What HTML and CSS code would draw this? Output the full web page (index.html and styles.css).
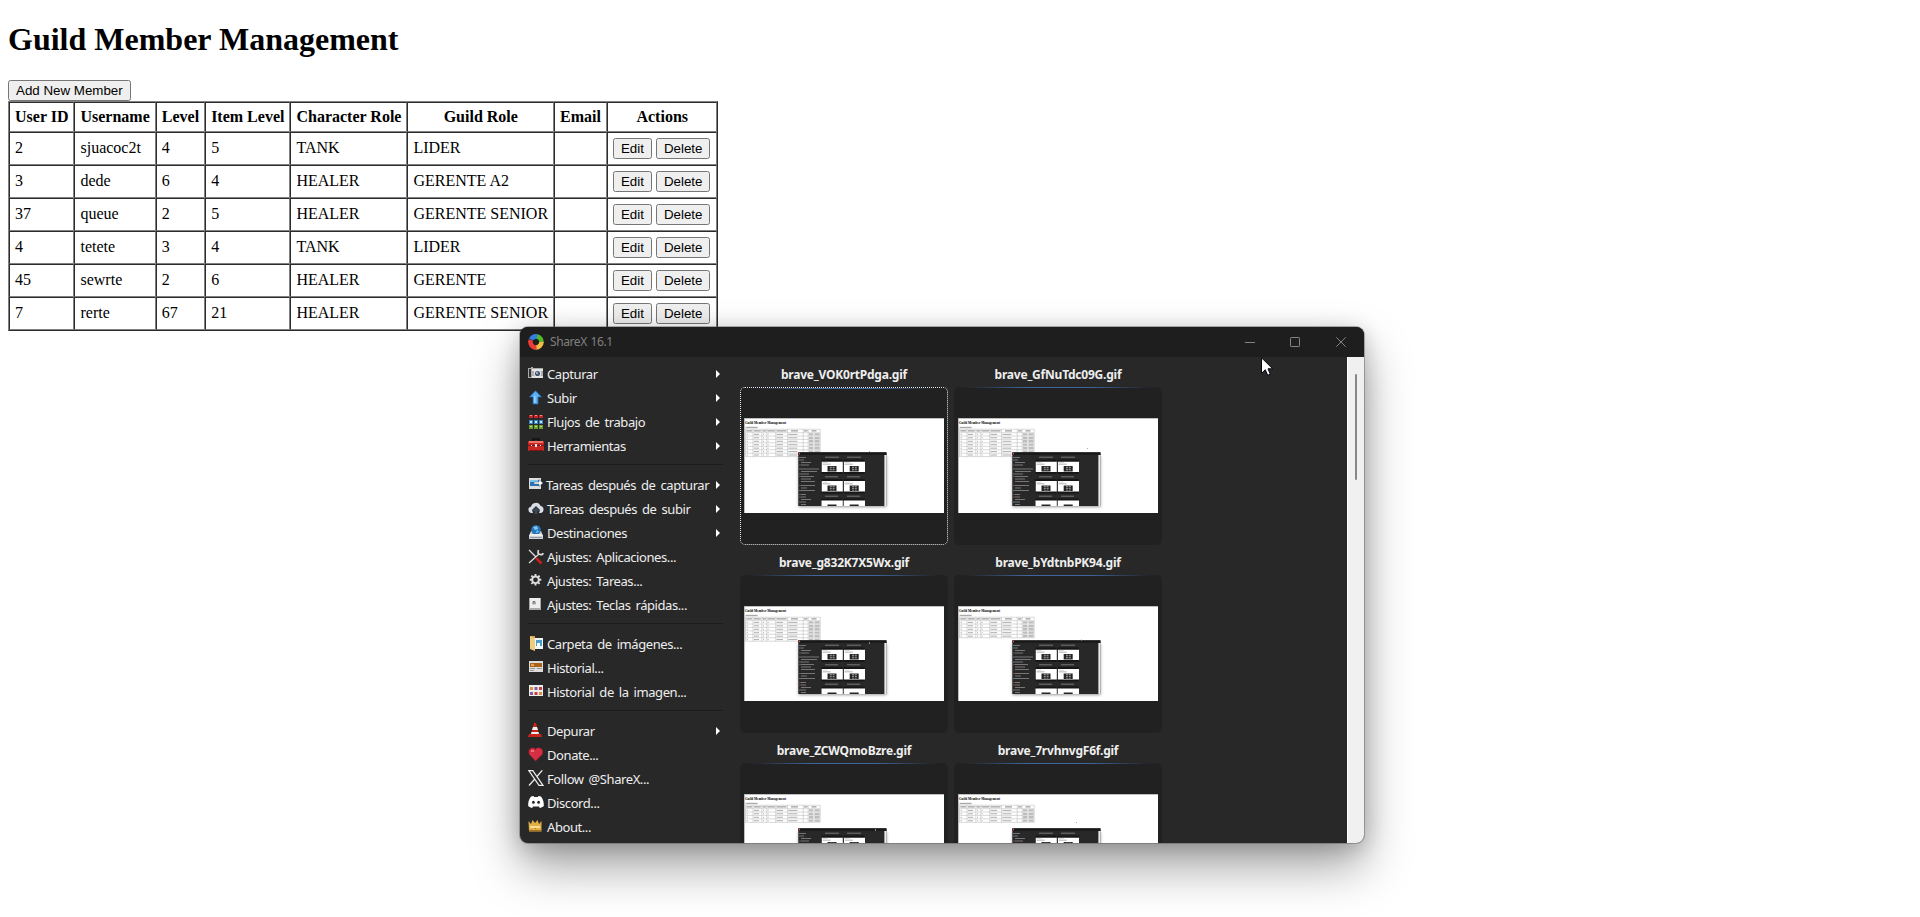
FILE: index.html
```html
<!DOCTYPE html>
<html lang="es">
<head>
<meta charset="utf-8">
<title>Guild Member Management</title>
<link rel="stylesheet" href="styles.css">
</head>
<body>
<svg class="defs" width="0" height="0" aria-hidden="true">
  <defs>
    <symbol id="row" viewBox="0 0 76 4" overflow="visible">
      <path d="M0 3.2H75M.3 0V3.4M7.8 0V3.4M16.6 0V3.4M21.5 0V3.4M30.5 0V3.4M42.3 0V3.4M58 0V3.4M63 0V3.4M75 0V3.4" stroke="#b9b9b9" stroke-width=".55" fill="none"/>
      <path d="M1.5 1.6h1.2M8.8 1.6h5M17.8 1.6h1M22.4 1.6h1M31.3 1.6h6.5M43.2 1.6h9" stroke="#a5a5a5" stroke-width=".9"/>
      <path d="M63.8 1.6h4.4M69.2 1.6h5.2" stroke="#bdbdbd" stroke-width="2.3"/>
    </symbol>
    <symbol id="mini" viewBox="0 0 22 11">
      <path fill="#fff" d="M0 0h21.3v10.6H0z"/><path fill="#ccc" d="M1 .8h5v.6H1zM1 2h8v1.5H1z"/>
      <path fill="#242424" d="M6 4.400h9v5.600H6z"/><path fill="#aaa" d="M8.300 5.200h2v1h-2zm2.800 0h2v1h-2zm-2.800 2h2v1h-2zm2.800 0h2v1h-2zm-2.800 2h2v.6h-2zm2.800 0h2v.6h-2z"/>
    </symbol>
    <symbol id="shot" viewBox="0 0 200 95">
      <path fill="#fff" d="M0 0h200v95H0z"/><path fill="none" stroke="#999" d="M.3 95V.3H200" stroke-width=".8"/>
      <text x="1" y="5.700" font-family="Liberation Serif, serif" font-weight="bold" font-size="3.340" textLength="41">Guild Member Management</text>
      <path d="M1.600 9.500h12" stroke="#aaa" stroke-width="1.400"/>
      <path d="M1.200 11.200h75M1.300 14.700h75M1.500 11v3.600M9 11v3.600M17.800 11v3.600M22.700 11v3.600M31.700 11v3.600M43.500 11v3.600M59.200 11v3.600M64.200 11v3.600M76.200 11v3.600" stroke="#b5b5b5" stroke-width=".5" fill="none"/>
      <path d="M2.300 12.900h5.900M9.800 12.900h7M18.500 12.900h3.500M23.400 12.900h7.500M32.500 12.900h10M47 12.900h7M60 12.900h3.500M67.500 12.900h5" stroke="#777" stroke-width=".9"/>
    </symbol>
    <symbol id="win" viewBox="0 0 200 95">
      <path class="mini-shadow" fill="#555" opacity=".6" d="M54.500 38h88v51h-88z"/>
      <path fill="#282828" d="M54.300 34.500h88.200V88H54.300z"/><path fill="#181818" d="M54.300 34.200h88.200v2.600H54.300z"/>
      <path fill="#ededed" d="M140.400 37h2.100v51h-2.100z"/><path fill="#e55" d="M54.800 34.800h1.200v1.500h-1.200z"/>
      <path d="M57 39.500h5M57 42h3M57 44.500h10M57 47h8M57 51h18M57 53.500h16M57 56h8M57 58.500h13M57 61h10M57 63.500h14M57 67.500h14M57 70h6M57 72.500h14M57 76.500h5M57 79h5M57 81.500h10M57 84h5M57 86.500h5M81 39.200h14M103 39.200h14M81 58.800h13M103 58.800h13M81 78.200h13M103 78.200h13" stroke="#8b8b8b" stroke-width=".8"/>
      <path d="M55.500 39.500h1M55.500 42h1M55.500 51h1M55.500 56h1M55.500 72.500h1M55.500 84h1" stroke="#8cbbe4"/><path d="M55.500 47h1M55.500 58.500h1M55.500 67.500h1M55.500 76.500h1M55.500 79h1" stroke="#d76450"/>
      <path fill="#171717" d="M77.500 41.500h21v14.500h-21zM99.700 41.500h21v14.500h-21zM77.500 61h21v14.500h-21zM99.700 61h21v14.500h-21zM77.500 80.500h21V88h-21zM99.700 80.500h21V88h-21z"/>
      <use href="#mini" x="77.500" y="43.500" width="22" height="11"/><use href="#mini" x="99.700" y="43.500" width="22" height="11"/>
      <use href="#mini" x="77.500" y="63" width="22" height="11"/><use href="#mini" x="99.700" y="63" width="22" height="11"/>
      <path fill="#fff" d="M77.500 82.500h21.300V88H77.500zm22.200 0H121V88H99.700z"/><path fill="#242424" d="M83.500 86.500h9V88h-9zm22.200 0h9V88h-9z"/>
    </symbol>
    <g id="r4"><use href="#row" x="1.200" y="14.800" width="76" height="4"/><use href="#row" x="1.200" y="18.200" width="76" height="4"/><use href="#row" x="1.200" y="21.650" width="76" height="4"/><use href="#row" x="1.200" y="25.100" width="76" height="4"/></g>
    <g id="r5"><use href="#r4"/><use href="#row" x="1.200" y="28.550" width="76" height="4"/></g>
    <g id="r6"><use href="#r5"/><use href="#row" x="1.200" y="32" width="76" height="4"/></g>
    <g id="r7"><use href="#r6"/><use href="#row" x="1.200" y="35.400" width="76" height="4"/></g>
  </defs>
</svg>

<h1>Guild Member Management</h1>
<button>Add New Member</button>
<table class="members">
  <thead><tr><th>User ID</th><th>Username</th><th>Level</th><th>Item Level</th><th>Character Role</th><th>Guild Role</th><th>Email</th><th>Actions</th></tr></thead>
  <tbody>
    <tr><td>2</td><td>sjuacoc2t</td><td>4</td><td>5</td><td>TANK</td><td>LIDER</td><td></td><td><button>Edit</button> <button>Delete</button></td></tr>
    <tr><td>3</td><td>dede</td><td>6</td><td>4</td><td>HEALER</td><td>GERENTE A2</td><td></td><td><button>Edit</button> <button>Delete</button></td></tr>
    <tr><td>37</td><td>queue</td><td>2</td><td>5</td><td>HEALER</td><td>GERENTE SENIOR</td><td></td><td><button>Edit</button> <button>Delete</button></td></tr>
    <tr><td>4</td><td>tetete</td><td>3</td><td>4</td><td>TANK</td><td>LIDER</td><td></td><td><button>Edit</button> <button>Delete</button></td></tr>
    <tr><td>45</td><td>sewrte</td><td>2</td><td>6</td><td>HEALER</td><td>GERENTE</td><td></td><td><button>Edit</button> <button>Delete</button></td></tr>
    <tr><td>7</td><td>rerte</td><td>67</td><td>21</td><td>HEALER</td><td>GERENTE SENIOR</td><td></td><td><button>Edit</button> <button>Delete</button></td></tr>
  </tbody>
</table>

<section class="window">
  <header class="titlebar">
    <svg class="logo" viewBox="0 0 16 16" fill="none" stroke-width="4.600">
      <path stroke="#2f7fe6" d="M3 5.500A5.600 5.600 0 0 1 9.500 2.600"/><path stroke="#55b82c" d="M9 2.500A5.600 5.600 0 0 1 13.500 8.500"/>
      <path stroke="#f0bd45" d="M13.500 8A5.600 5.600 0 0 1 7.500 13.500"/><path stroke="#ee3b38" d="M8.500 13.500A5.600 5.600 0 0 1 2.800 6"/><path stroke="#2f7fe6" d="M4.500 3.700A5.600 5.600 0 0 1 8 2.500"/>
    </svg>
    <span class="caption">ShareX 16.1</span>
    <div class="controls">
      <svg viewBox="0 0 10 10"><path d="M0 5.500h10"/></svg>
      <svg viewBox="0 0 10 10"><rect x=".5" y=".5" width="9" height="9" rx=".7"/></svg>
      <svg viewBox="0 0 10 10"><path d="M.3.300l9.400 9.400M9.700.300L.3 9.700"/></svg>
    </div>
  </header>
  <div class="client">
    <nav class="menu">
      <ul>
        <li class="sub"><svg viewBox="0 0 16 16"><path fill="#aaa" d="M0 2h3V1h2v1h10v10H0z"/><path fill="#e2e2e2" d="M4 3h11v2H4zM4 10h11v2H4z"/><path fill="#333" d="M1 3h2v8H1z"/><circle cx="9.500" cy="7.500" r="3.700" fill="#e8e8e8"/><circle cx="9.500" cy="7.500" r="2.600" fill="#46546b"/><circle cx="9" cy="7" r="1" fill="#a9c8ef"/></svg><span>Capturar</span></li>
        <li class="sub"><svg viewBox="0 0 16 16"><path fill="#5db0f2" stroke="#2068ae" stroke-width=".8" d="M7.500.800L13.500 7H10v7H5V7H1.500z"/><path fill="#9dd3ff" d="M6 6h1.500v7H6z"/></svg><span>Subir</span></li>
        <li class="sub"><svg viewBox="0 0 16 16"><path fill="#c52525" d="M1 1h4v3H1zm5 0h4v3H6zm5 0h4v3h-4z"/><path fill="#3784c5" d="M1 6h4v4H1zm5 0h4v4H6zm5 0h4v4h-4z"/><path fill="#6a9d2f" d="M1 11h4v4H1zm5 0h4v4H6zm5 0h4v4h-4z"/><path fill="#ff8a82" d="M2 1h2v1H2zm5 0h2v1H7zm5 0h2v1h-2z"/><path fill="#c4e6ff" d="M2 7h2v2H2zm5 0h2v2H7zm5 0h2v2h-2z"/><path fill="#c1de81" d="M2 12h2v1H2zm5 0h2v1H7zm5 0h2v1h-2z"/></svg><span>Flujos de trabajo</span></li>
        <li class="sub"><svg viewBox="0 0 16 16"><path fill="none" stroke="#111" stroke-width="1.500" d="M5 3V1h6v2"/><path fill="#c52823" d="M0 3h16v10H0z"/><path fill="#f1736a" d="M1 3h14v2H1z"/><path fill="#7b1515" d="M0 7h16v1H0zM1 12h14v1H1z"/><path fill="#eee" d="M7 6h2v3H7zM3 7h1v1H3zm9 0h1v1h-1z"/></svg><span>Herramientas</span></li>
      </ul>
      <ul>
        <li class="sub"><svg viewBox="0 0 16 16"><path fill="#ddd" d="M1 1h12v11H1z"/><path fill="#2b75b4" d="M2 3h10v6H2z"/><path fill="#82c3ee" d="M2 3h8v2H2z"/><path fill="#fff" stroke="#3b6078" stroke-width=".5" d="M6 5h5V2.500L15 6l-4 3.500V7H6z"/></svg><span class="tight">Tareas después de capturar</span></li>
        <li class="sub"><svg viewBox="0 0 16 16"><path fill="#d9dde5" d="M3 12a3.200 3.200 0 0 1 0-6.300A5 5 0 0 1 12.500 5 3.600 3.600 0 0 1 13 12h-2L12 9 8 5 4 9l1 3z"/><path fill="#3d4654" d="M8 6l4 4H9.500v3h-3v-3H4z"/></svg><span>Tareas después de subir</span></li>
        <li class="sub"><svg viewBox="0 0 16 16"><path fill="#d0d4da" d="M3 6h10l2 5v3H1v-3z"/><path fill="#8f969e" d="M2 12h12v1H2z"/><circle cx="8" cy="5" r="4.800" fill="#2478bb"/><path fill="#80c8f4" d="M5 2l4-1 1 3-3 1zM9 5l2 2-3 1z"/><path fill="#eee" d="M2 9h12l1 2H1z"/></svg><span>Destinaciones</span></li>
        <li><svg viewBox="0 0 16 16"><path fill="none" stroke="#ddd" stroke-width="1.300" d="M1 14L11 5M1 1l7 7"/><path fill="none" stroke="#ddd" stroke-width="1.700" d="M10.500 1Q9 5 12 5.500T15 4"/><path stroke="#c8201d" stroke-width="2.500" d="M8 9l5.500 5.500"/></svg><span>Ajustes: Aplicaciones...</span></li>
        <li><svg viewBox="0 0 16 16"><circle cx="7.500" cy="6.800" r="3.300" fill="none" stroke="#ddd" stroke-width="1.900"/><path stroke="#ddd" stroke-width="1.900" d="M7.500 1v2.500M7.500 10v2.600M1.700 6.800h2.500M10.800 6.800h2.500M3.400 2.700l1.800 1.800M9.900 9.100l1.700 1.800M3.400 10.900l1.800-1.800M9.900 4.500l1.700-1.800"/></svg><span>Ajustes: Tareas...</span></li>
        <li><svg viewBox="0 0 16 16"><path fill="#a9a9a9" d="M1 1h12v12H1z"/><path fill="#eee" d="M2 1h10v10H2z"/><path fill="none" stroke="#777" d="M5 7.500v-3h2v3M5 6h2"/></svg><span>Ajustes: Teclas rápidas...</span></li>
      </ul>
      <ul>
        <li><svg viewBox="0 0 16 16"><path fill="#d8a44c" d="M2 0h5v2h6v11H2z"/><path fill="#f3f7fa" d="M6 2h9v11H6z"/><path fill="#4b9cd0" d="M8 4h6v6H8z"/><path fill="#fff" d="M9 7h3v4H9z"/><path fill="#edcd7d" d="M2 0l5 3v12l-5-2z"/></svg><span>Carpeta de imágenes...</span></li>
        <li><svg viewBox="0 0 16 16"><path fill="#ddd" d="M1 1h14v11H1z"/><path fill="#a7651c" d="M2 3h12v4H2z"/><path fill="#eaa34c" d="M3 4h3v2H3z"/><path fill="#999" d="M2 8h5v1H2zm7 0h5v1H9zM2 10h4v1H2z"/></svg><span>Historial...</span></li>
        <li><svg viewBox="0 0 16 16"><path fill="#ededed" d="M1 1h14v11H1z"/><path fill="#d89045" d="M2 3h3v3H2zm9 5h3v3h-3z"/><path fill="#8a5798" d="M6.500 3h3v3h-3zM2 8h3v3H2z"/><path fill="#c3423f" d="M11 3h3v3h-3zM6.500 8h3v3h-3z"/></svg><span>Historial de la imagen...</span></li>
      </ul>
      <ul>
        <li class="sub"><svg viewBox="0 0 16 16"><path fill="#c9231d" d="M6 0h2l3 11h2l1 3H0l1-3h2z"/><path fill="#eee" d="M5 4h4l1 3H4zM3.500 9h7l.5 2H3z"/></svg><span>Depurar</span></li>
        <li><svg viewBox="0 0 16 16"><path fill="#d62e42" stroke="#a81d30" stroke-width=".6" d="M7.500 14L1 7V3l2.500-2H6l1.500 1.500L9 1h3l2.500 2v4z"/><path fill="#f76d75" d="M3 3h3v2H3z"/></svg><span>Donate...</span></li>
        <li><svg class="big" viewBox="0 0 16 16"><path fill="none" stroke="#eee" stroke-width="1.200" d="M.8.700h4L15 15.300h-4zM14.300.300L8.900 6.500M6.800 9L1 15.500"/></svg><span>Follow @ShareX...</span></li>
        <li><svg viewBox="0 0 16 16"><path fill="#fff" d="M3 1.500L5.500.900l.7 1.100h3.600l.7-1.100 2.500.6c2.300 3 3 6 2.800 9.500-1.300 1.100-2.600 1.600-4 1.900l-.8-1.500H5l-.8 1.500c-1.400-.3-2.700-.8-4-1.900C0 7.500.7 4.500 3 1.500z"/><ellipse cx="5.400" cy="7.300" rx="1.400" ry="1.500" fill="#282828"/><ellipse cx="10.600" cy="7.300" rx="1.400" ry="1.500" fill="#282828"/></svg><span>Discord...</span></li>
        <li><svg viewBox="0 0 16 16"><path fill="#e2ae48" d="M.5 2L3 5l1.500-4L7 4l2.500-3L11 5l2.500-3v10.500H1z"/><path fill="#f8de91" d="M2 7h10v2H2z"/><path fill="#a86f1d" d="M1 11h12v1H1zM7 9h1v1H7z"/></svg><span>About...</span></li>
      </ul>
    </nav>
    <div class="gallery">
      <figure class="selected"><figcaption>brave_VOK0rtPdga.gif</figcaption><div class="frame"><svg viewBox="0 0 200 95"><use href="#shot"/><use href="#r7"/><use href="#win"/><path stroke="#aaa" d="M125 33.500h1"/></svg></div></figure>
      <figure><figcaption>brave_GfNuTdc09G.gif</figcaption><div class="frame"><svg viewBox="0 0 200 95"><use href="#shot"/><use href="#r7"/><use href="#win"/><path stroke="#aaa" d="M129 30.500h1"/></svg></div></figure>
      <figure><figcaption>brave_g832K7X5Wx.gif</figcaption><div class="frame"><svg viewBox="0 0 200 95"><use href="#shot"/><use href="#r6"/><use href="#win"/><path stroke="#eee" d="M125 37h1"/></svg></div></figure>
      <figure><figcaption>brave_bYdtnbPK94.gif</figcaption><div class="frame"><svg viewBox="0 0 200 95"><use href="#shot"/><use href="#r5"/><use href="#win"/><path stroke="#aaa" d="M123 34h1"/></svg></div></figure>
      <figure><figcaption>brave_ZCWQmoBzre.gif</figcaption><div class="frame"><svg viewBox="0 0 200 95"><use href="#shot"/><use href="#r4"/><use href="#win"/><path stroke="#eee" d="M131 36h1"/></svg></div></figure>
      <figure><figcaption>brave_7rvhnvgF6f.gif</figcaption><div class="frame"><svg viewBox="0 0 200 95"><use href="#shot"/><use href="#r4"/><use href="#win"/><path stroke="#aaa" d="M118 28.500h1"/></svg></div></figure>
    </div>
    <div class="scrollbar"><div class="thumb"></div></div>
  </div>
</section>
<svg class="cursor" viewBox="0 0 12 19"><path fill="#fff" stroke="#05070f" d="M.5.800v15.500l3.800-3.600 2.400 5.600 2.600-1.100L7 11.800h4.700z"/></svg>
</body>
</html>
```
FILE: styles.css
```css
html, body {
  height: 100%;
  overflow: hidden;
}
body {
  margin: 0 8px;
  background: #fff;
  color: #000;
  font-family: "Liberation Serif", serif;
}
.defs { position: absolute; }
h1 { margin: 0; padding: 21.44px 0; font-size: 32px; line-height: 37px; }
button { font-family: "Liberation Sans", Arial, sans-serif; font-size: 13.333px; }
.members {
  border: 1px outset gray;
  border-spacing: 0;
}
.members th, .members td {
  border: 1px inset gray;
  padding: 5px;
}
.members th:last-child { min-width: 98.5px; }

.window {
  position: absolute;
  left: 520px;
  top: 327px;
  width: 844px;
  height: 516px;
  display: flex;
  flex-direction: column;
  border-radius: 8px;
  background: #282828;
  color: #eee;
  font-family: "Noto Sans", sans-serif;
  box-shadow: 0 0 0 1px rgba(90, 90, 90, .45), 0 24px 48px rgba(0, 0, 0, .36), 0 4px 22px rgba(0, 0, 0, .2);
}
.titlebar {
  height: 30px;
  display: flex;
  align-items: center;
  padding-left: 8px;
  background: #1e1e1e;
  border-radius: 8px 8px 0 0;
  box-sizing: border-box;
}
.logo { width: 16px; height: 16px; margin-top: -1px; }
.caption { margin: -2px 0 0 6px; color: #808080; font-size: 12px; letter-spacing: -.4px; word-spacing: 1px; }
.controls { margin-left: auto; display: flex; gap: 35.500px; padding-right: 18px; margin-top: -1px; }
.controls svg { width: 10px; height: 10px; fill: none; stroke: #858585; stroke-width: 1; }
.controls svg:nth-child(2) { margin: 0 .5px 0 -.5px; }
.client { flex: 1; min-height: 0; display: flex; }

.menu { width: 208px; padding: 5px 0 0 8px; box-sizing: border-box; }
.menu ul { margin: 0; padding: 0; list-style: none; width: 195px; }
.menu ul + ul { border-top: 1px solid #1c1c1c; margin-top: 6px; padding-top: 8px; }
.menu li {
  height: 24px;
  display: flex;
  align-items: center;
  font-size: 13px;
  letter-spacing: -.42px;
  word-spacing: 2px;
  white-space: nowrap;
}
.menu svg { width: 16px; height: 16px; margin: -1px 3px 0 0; flex: none; }
.menu svg.big { margin-top: -3px; }
.menu .tight { margin-left: -1px; }
.menu .sub::after {
  content: "";
  margin-left: auto;
  margin-right: 3px;
  border-left: 4px solid #fff;
  border-top: 4px solid transparent;
  border-bottom: 4px solid transparent;
}

.gallery {
  flex: 1;
  display: grid;
  grid-template-columns: 208px 208px;
  grid-auto-rows: 188px;
  column-gap: 6px;
  padding-left: 12px;
  overflow: hidden;
}
figure { margin: 0; }
figcaption { height: 30px; line-height: 36px; text-align: center; font-size: 12px; font-weight: bold; letter-spacing: -.22px; }
.frame {
  height: 158px;
  box-sizing: border-box;
  padding: 31px 4px 0;
  border-radius: 5px;
  background: linear-gradient(90deg, transparent 5%, #3f659b 35%, #3f659b 65%, transparent 95%) top / 100% 1px no-repeat #212121;
}
.frame svg { display: block; width: 200px; height: 95px; }
.selected .frame { border: 1px dotted #e8e8e8; padding: 30px 3px 0; }
.mini-shadow { filter: blur(1.5px); }
.scrollbar { width: 17px; background: #f0f0f0; border-left: 1px solid #fff; border-radius: 0 0 8px 0; box-sizing: border-box; padding: 17px 7px 0; }
.thumb { width: 2px; height: 106px; background: #868686; border-radius: 1px; }
.cursor { position: absolute; left: 1261px; top: 357px; width: 12px; height: 19px; }
```
